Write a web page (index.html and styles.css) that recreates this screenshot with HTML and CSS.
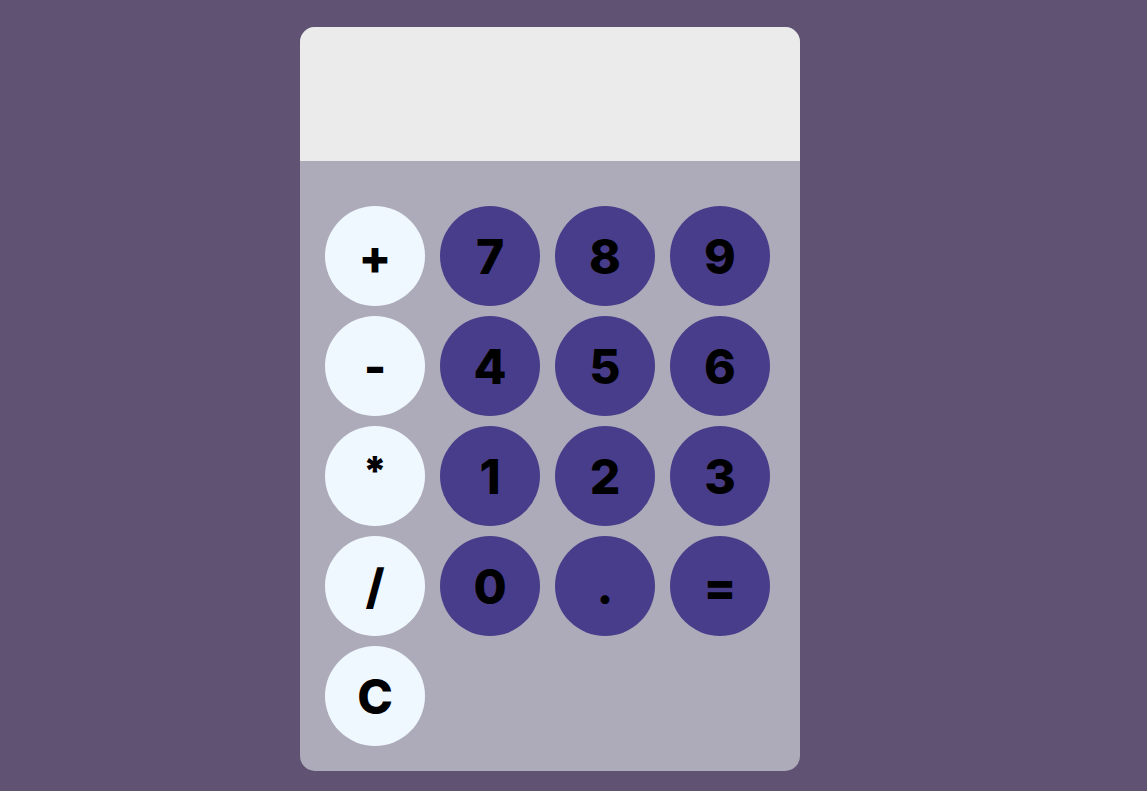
FILE: index.html
```html
<!DOCTYPE html>
<html>
<head>
<meta charset="utf-8">
<link rel="stylesheet" href="styles.css">
</head>
<body>
<div class="calc">
  <div class="display"></div>
  <div class="keys">
    <button class="key op">+</button>
    <button class="key num">7</button>
    <button class="key num">8</button>
    <button class="key num">9</button>
    <button class="key op">-</button>
    <button class="key num">4</button>
    <button class="key num">5</button>
    <button class="key num">6</button>
    <button class="key op star">*</button>
    <button class="key num">1</button>
    <button class="key num">2</button>
    <button class="key num">3</button>
    <button class="key op">/</button>
    <button class="key num">0</button>
    <button class="key num">.</button>
    <button class="key num">=</button>
    <button class="key op">C</button>
  </div>
</div>
</body>
</html>
```
FILE: styles.css
```css
html, body {
  margin: 0;
  padding: 0;
  background: #5f5272;
  height: 100%;
}
body {
  padding: 27px 0 0 300px;
  box-sizing: border-box;
}
.calc {
  width: 500px;
  height: 744px;
  border-radius: 15px;
  overflow: hidden;
  background: #adabb9;
  display: flex;
  flex-direction: column;
}
.display {
  height: 134px;
  background: #ebebeb;
}
.keys {
  padding: 45px 25px 25px 25px;
  display: grid;
  grid-template-columns: repeat(4, 100px);
  grid-auto-rows: 100px;
  column-gap: 15px;
  row-gap: 10px;
}
.key {
  width: 100px;
  height: 100px;
  border: none;
  border-radius: 50%;
  padding: 0;
  margin: 0;
  font-family: Inter, "Liberation Sans", sans-serif;
  font-weight: 800;
  font-size: 48px;
  color: #000;
  display: flex;
  align-items: center;
  justify-content: center;
}
.star {
  font-size: 40px;
  font-weight: 900;
  padding-bottom: 12px;
}
.op { background: #f0f8ff; }
.num { background: #483d8b; }
```
